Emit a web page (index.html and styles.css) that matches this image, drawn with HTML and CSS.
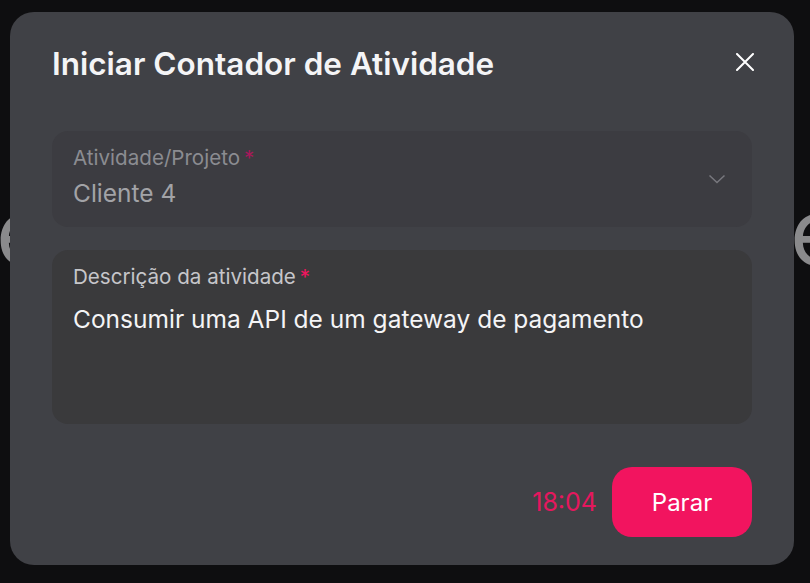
FILE: index.html
```html
<!DOCTYPE html>
<html lang="pt-BR">
<head>
<meta charset="utf-8">
<link rel="stylesheet" href="styles.css">
</head>
<body>
<div class="backdrop" aria-hidden="true">
  <span class="bg-glyph bg-left">e</span>
  <span class="bg-glyph bg-right">e</span>
</div>
<div class="modal">
  <div class="modal-header">
    <h1 class="modal-title">Iniciar Contador de Atividade</h1>
    <button class="close-btn" aria-label="Fechar">
      <svg width="18" height="18" viewBox="0 0 18 18"><path d="M1 1 L17 17 M17 1 L1 17" stroke="#ffffff" stroke-width="2" stroke-linecap="round"/></svg>
    </button>
  </div>
  <div class="field field-select">
    <div class="field-body">
      <div class="label label-dim">Atividade/Projeto<span class="req req-dim">*</span></div>
      <div class="value value-dim">Cliente 4</div>
    </div>
    <svg class="chevron" width="18" height="10" viewBox="0 0 18 10"><path d="M1.5 1.5 L9 8.5 L16.5 1.5" fill="none" stroke="#78787e" stroke-width="1.5"/></svg>
  </div>
  <div class="field field-area">
    <div class="label">Descrição da atividade<span class="req">*</span></div>
    <div class="value">Consumir uma API de um gateway de pagamento</div>
  </div>
  <div class="footer">
    <span class="timer">18:04</span>
    <button class="stop-btn">Parar</button>
  </div>
</div>
</body>
</html>
```
FILE: styles.css
```css
html, body {
  margin: 0;
  padding: 0;
}
body {
  background: #0e0e10;
  width: 810px;
  height: 583px;
  overflow: hidden;
  position: relative;
  font-family: Inter, "Noto Sans", sans-serif;
}
.backdrop {
  position: absolute;
  inset: 0;
  z-index: 0;
}
.bg-glyph {
  position: absolute;
  top: 186px;
  font-size: 92px;
  line-height: 1;
  color: #8a8a8c;
  font-weight: 400;
}
.bg-left { left: -4px; }
.bg-right { left: 790px; }
.modal {
  position: relative;
  z-index: 1;
  box-sizing: border-box;
  margin: 12px 0 0 10px;
  width: 784px;
  height: 553px;
  background: #404146;
  border-radius: 24px;
  padding: 34px 42px 28px;
  display: flex;
  flex-direction: column;
}
.modal-header {
  display: flex;
  justify-content: space-between;
  align-items: center;
  height: 36px;
  margin-bottom: 49px;
}
.modal-title {
  margin: 0;
  font-size: 31.5px;
  font-weight: 600;
  color: #f4f4f6;
  line-height: 36px;
}
.close-btn {
  background: none;
  border: 0;
  padding: 0;
  width: 18px;
  height: 18px;
  margin-right: -2px;
  margin-top: -4px;
  display: flex;
  cursor: pointer;
}
.field {
  box-sizing: border-box;
  border-radius: 16px;
  padding: 0 21px;
}
.field-select {
  background: #3c3c41;
  height: 96px;
  display: flex;
  align-items: flex-start;
  justify-content: space-between;
  padding-top: 15px;
  padding-right: 26px;
}
.chevron {
  align-self: center;
  margin-top: -15px;
}
.field-area {
  background: #3a3a3c;
  height: 174px;
  margin-top: 23px;
  padding-top: 15px;
}
.label {
  font-size: 20.6px;
  line-height: 24px;
  color: #c6c6ca;
}
.label-dim { color: #8b8c91; }
.req {
  color: #f2145f;
  margin-left: 4px;
}
.req-dim { color: #a8185a; }
.value {
  font-size: 24.5px;
  line-height: 30px;
  color: #f4f4f6;
  margin-top: 15px;
}
.value-dim {
  color: #a2a3a7;
  margin-top: 8px;
}
.footer {
  margin-top: auto;
  display: flex;
  justify-content: flex-end;
  align-items: center;
  gap: 15px;
}
.timer {
  font-size: 25px;
  color: #e5175e;
}
.stop-btn {
  width: 140px;
  height: 70px;
  border: 0;
  border-radius: 20px;
  background: #f2145f;
  color: #ffffff;
  font-family: Inter, "Noto Sans", sans-serif;
  font-size: 24px;
  cursor: pointer;
}
```
